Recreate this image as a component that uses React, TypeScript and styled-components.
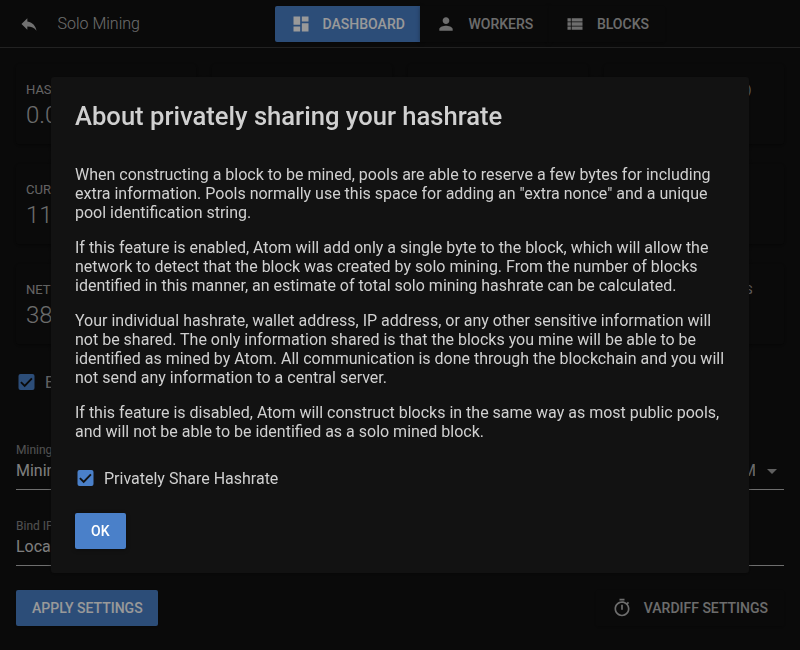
import React from "react";
import styled, { createGlobalStyle } from "styled-components";

const Global = createGlobalStyle`
  * { box-sizing: border-box; }
  html, body { margin: 0; background: #121212; overflow: hidden; }
  body { font-family: Roboto, sans-serif; font-size: 16px; color: #fff; }
`;

const Page = styled.div`
  height: 650px;
  display: flex;
  flex-direction: column;
  background: #121212;
`;

const Header = styled.header`
  height: 48px;
  flex: none;
  display: grid;
  grid-template-columns: 274.6px 1fr;
  align-items: center;
  border-bottom: 1px solid rgba(255, 255, 255, 0.17);
`;

const Brand = styled.div`
  display: flex;
  align-items: center;
  gap: 18.5px;
  padding-left: 19px;
  color: rgba(255, 255, 255, 0.7);
  font-weight: 300;
  svg { color: #bdbdbd; }
`;

const Tabs = styled.nav`
  display: flex;
`;

const Button = styled.button<{ $primary?: boolean; $shape?: string; $dim?: boolean; $width?: number }>`
  height: 36px;
  width: ${(p) => (p.$width ? `${p.$width}px` : "auto")};
  padding: 0 16px;
  display: inline-flex;
  align-items: center;
  gap: 12px;
  border: 0;
  border-radius: ${(p) => p.$shape || "2px"};
  background: ${(p) => (p.$primary ? "#4a80c9" : "#121212")};
  color: ${(p) => (p.$dim ? "rgba(255, 255, 255, 0.7)" : "#fff")};
  font: 500 14px Roboto, sans-serif;
  text-transform: uppercase;
  white-space: nowrap;
  box-shadow: 0 1px 4px rgba(0, 0, 0, 0.35);
`;

const TabButton = styled(Button)`
  & + & { margin-left: -0.4px; }
`;

const Main = styled.main`
  padding: 16px 16px 0;
  display: flex;
  flex-direction: column;
`;

const Cards = styled.section`
  display: grid;
  grid-template-columns: repeat(4, 1fr);
  grid-auto-rows: 80px;
  gap: 20px 16px;
`;

const Card = styled.article`
  padding: 17px 10px 0;
  border-radius: 3px;
  background: #121212;
  box-shadow: 0 1px 5px rgba(0, 0, 0, 0.5);
  white-space: nowrap;
`;

const CardLabel = styled.div<{ $width?: number }>`
  width: ${(p) => (p.$width ? `${p.$width}px` : "auto")};
  display: flex;
  justify-content: ${(p) => (p.$width ? "flex-end" : "flex-start")};
  font-size: 13px;
  line-height: 17px;
  color: rgba(255, 255, 255, 0.65);
`;

const CardValue = styled.div`
  margin-top: 3px;
  font-size: 24px;
  line-height: 28px;
  font-weight: 300;
  color: rgba(255, 255, 255, 0.7);
`;

const CheckRow = styled.label<{ $bright?: boolean }>`
  height: 24px;
  display: flex;
  align-items: center;
  gap: 8px;
  color: ${(p) => (p.$bright ? "#d0d0d0" : "rgba(255, 255, 255, 0.65)")};
  svg { flex: none; }
`;

const SettingCheck = styled.div`
  margin: 26px 0 0 -1px;
`;

const Fields = styled.div`
  margin-top: 48px;
  display: grid;
  gap: 28px;
`;

const Field = styled.div`
  height: 48px;
  border-bottom: 1px solid rgba(255, 255, 255, 0.7);
`;

const FieldLabel = styled.div`
  font-size: 12px;
  line-height: 16px;
  color: rgba(255, 255, 255, 0.5);
`;

const FieldValue = styled.div`
  display: flex;
  justify-content: space-between;
  padding-top: 1px;
  line-height: 24px;
  color: rgba(255, 255, 255, 0.83);
`;

const Clipped = styled.span`
  margin-left: auto;
  width: 13px;
  overflow: hidden;
  color: rgba(255, 255, 255, 0.7);
`;

const Caret = styled.svg`
  margin: 0 7px 0 12px;
  align-self: center;
`;

const Actions = styled.div`
  margin-top: 24px;
  display: flex;
  justify-content: space-between;
`;

const Overlay = styled.div`
  position: fixed;
  inset: 0;
  display: flex;
  align-items: center;
  justify-content: center;
  background: rgba(0, 0, 0, 0.4);
`;

const Dialog = styled.div`
  width: 698px;
  height: 496px;
  padding: 24px;
  border-radius: 3px;
  background: #121212;
  box-shadow: 0 1px 4px rgba(0, 0, 0, 0.4);
`;

const Title = styled.h2`
  margin: 0 0 34px;
  font-size: 25.6px;
  line-height: 30px;
  font-weight: 500;
  color: #d0d0d0;
`;

const Paragraph = styled.p`
  margin: 0 0 16px;
  line-height: 19px;
  color: #d0d0d0;
  white-space: pre-line;
`;

const DialogCheck = styled.div`
  margin: 25px 0 23px -1px;
`;

const Checkbox = () => (
  <svg width="22" height="22" viewBox="0 0 22 22">
    <rect x="3.5" y="3" width="16" height="16" rx="2" fill="#4a80c9" />
    <path d="M5.9 11.2 9.7 15 16.9 7.4" fill="none" stroke="#121212" strokeWidth="1.9" />
  </svg>
);

const Icon = ({ d, size = 20 }: { d: string; size?: number }) => (
  <svg width={size} height={size} viewBox="0 0 24 24" fill="currentColor">
    <path d={d} />
  </svg>
);

const icons = {
  reply: "M10 9V5l-7 7 7 7v-4.1c5 0 8.5 1.6 11 5.1-1-5-4-10-11-11z",
  dashboard: "M3 13h8V3H3v10zm0 8h8v-6H3v6zm10 0h8V11h-8v10zm0-18v6h8V3h-8z",
  person: "M12 12c2.21 0 4-1.79 4-4s-1.79-4-4-4-4 1.79-4 4 1.79 4 4 4zm0 2c-2.67 0-8 1.34-8 4v2h16v-2c0-2.66-5.33-4-8-4z",
  list: "M3 14h4v-4H3v4zm0 5h4v-4H3v4zM3 9h4V5H3v4zm5 5h13v-4H8v4zm0 5h13v-4H8v4zM8 5v4h13V5H8z",
  timer:
    "M15 1H9v2h6V1zm-4 13h2V8h-2v6zm8.03-6.61l1.42-1.42c-.43-.51-.9-.99-1.41-1.41l-1.42 1.42C16.07 4.74 14.12 4 12 4c-4.97 0-9 4.03-9 9s4.02 9 9 9 9-4.03 9-9c0-2.12-.74-4.07-1.97-5.61zM12 20c-3.87 0-7-3.13-7-7s3.13-7 7-7 7 3.13 7 7-3.13 7-7 7z",
};

const stats: { label: string; value: string; width?: number }[] = [
  { label: "HASHRATE", value: "0.00 H/s" },
  { label: "SHARES", value: "0" },
  { label: "BLOCKS FOUND", value: "0" },
  { label: "HASHRATE (AVERAGE)", value: "0", width: 137.6 },
  { label: "CURRENT EFFORT", value: "11%" },
  { label: "ROUND SHARES", value: "0" },
  { label: "BLOCK REWARD", value: "0" },
  { label: "WORKERS", value: "0" },
  { label: "NETWORK HASHRATE", value: "38 MH/s" },
  { label: "DIFFICULTY", value: "0" },
  { label: "HEIGHT", value: "0" },
  { label: "CONNECTED MINERS", value: "0", width: 138.5 },
];

const paragraphs = [
  `When constructing a block to be mined, pools are able to reserve a few bytes for including
extra information. Pools normally use this space for adding an "extra nonce" and a unique
pool identification string.`,
  `If this feature is enabled, Atom will add only a single byte to the block, which will allow the
network to detect that the block was created by solo mining. From the number of blocks
identified in this manner, an estimate of total solo mining hashrate can be calculated.`,
  `Your individual hashrate, wallet address, IP address, or any other sensitive information will
not be shared. The only information shared is that the blocks you mine will be able to be
identified as mined by Atom. All communication is done through the blockchain and you will
not send any information to a central server.`,
  `If this feature is disabled, Atom will construct blocks in the same way as most public pools,
and will not be able to be identified as a solo mined block.`,
];

export default function App() {
  return (
    <>
      <Global />
      <Page>
        <Header>
          <Brand>
            <Icon d={icons.reply} />
            Solo Mining
          </Brand>
          <Tabs>
            <TabButton $primary $shape="2px 0 0 2px"><Icon d={icons.dashboard} />Dashboard</TabButton>
            <TabButton $dim $shape="0"><Icon d={icons.person} />Workers</TabButton>
            <TabButton $dim $shape="0 2px 2px 0"><Icon d={icons.list} />Blocks</TabButton>
          </Tabs>
        </Header>
        <Main>
          <Cards>
            {stats.map((s) => (
              <Card key={s.label}>
                <CardLabel $width={s.width}>{s.label}</CardLabel>
                <CardValue>{s.value}</CardValue>
              </Card>
            ))}
          </Cards>
          <SettingCheck>
            <CheckRow><Checkbox />Enable Mining Pool</CheckRow>
          </SettingCheck>
          <Fields>
            <Field>
              <FieldLabel>Mining Address</FieldLabel>
              <FieldValue>
                Mining Wallet
                <Clipped>Main</Clipped>
                <Caret width="10" height="5" viewBox="0 0 10 5"><path d="M0 0h10L5 5z" fill="#a0a0a0" /></Caret>
              </FieldValue>
            </Field>
            <Field>
              <FieldLabel>Bind IP</FieldLabel>
              <FieldValue>Localhost</FieldValue>
            </Field>
          </Fields>
          <Actions>
            <Button $primary $width={142}>Apply Settings</Button>
            <Button $dim><Icon d={icons.timer} />Vardiff Settings</Button>
          </Actions>
        </Main>
      </Page>
      <Overlay>
        <Dialog>
          <Title>About privately sharing your hashrate</Title>
          {paragraphs.map((text) => <Paragraph key={text}>{text}</Paragraph>)}
          <DialogCheck>
            <CheckRow $bright><Checkbox />Privately Share Hashrate</CheckRow>
          </DialogCheck>
          <Button $primary $width={51}>OK</Button>
        </Dialog>
      </Overlay>
    </>
  );
}
